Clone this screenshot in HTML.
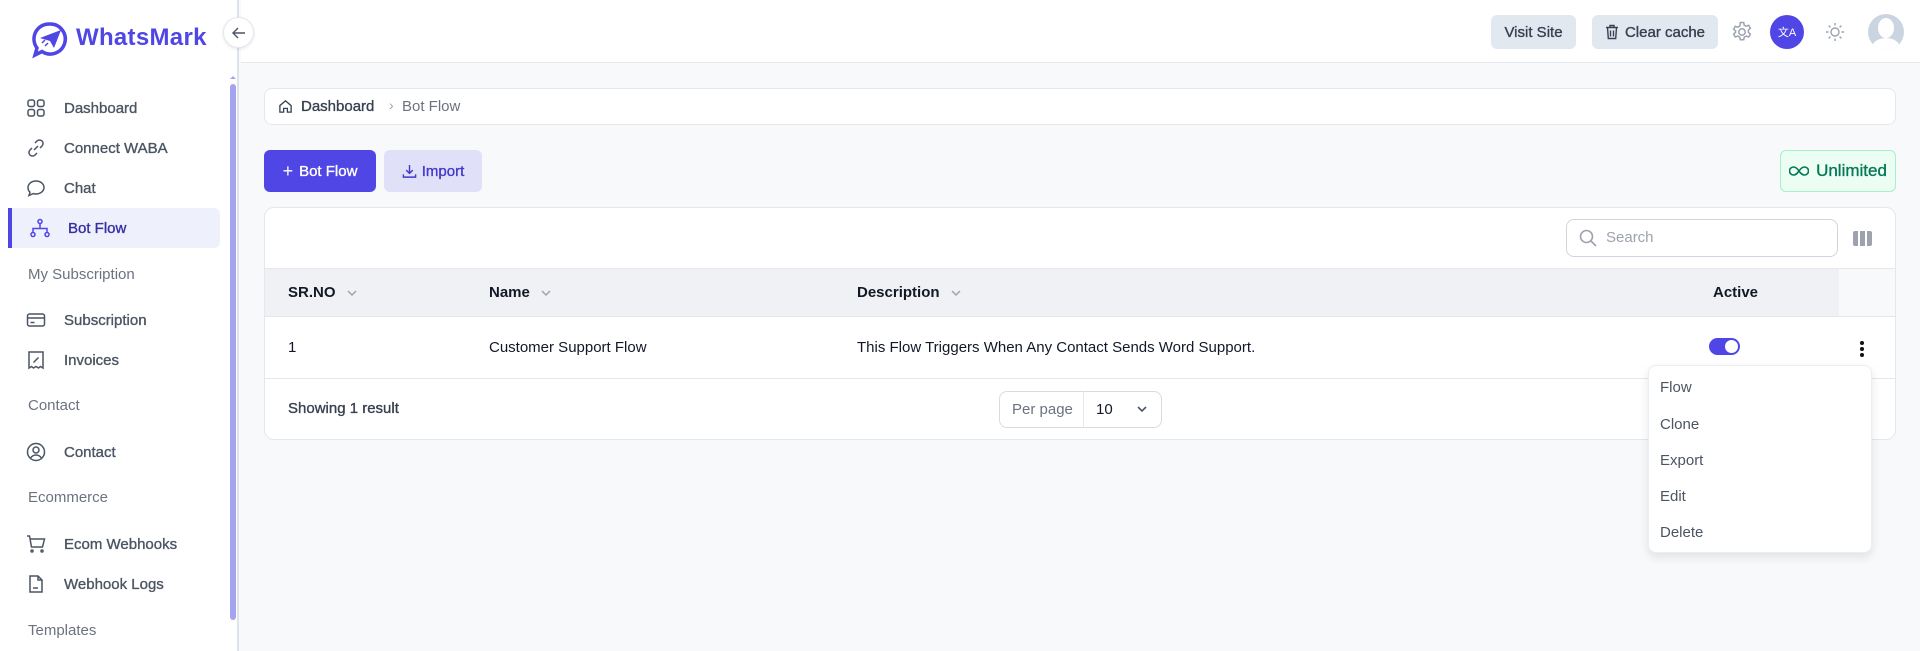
<!DOCTYPE html>
<html><head><meta charset="utf-8"><style>
*{box-sizing:border-box;margin:0;padding:0}
body{width:1920px;height:651px;overflow:hidden;background:#f8f9fb;font-family:"Liberation Sans",sans-serif;position:relative;color:#111827}
.a{position:absolute}
.m{-webkit-text-stroke:0.35px currentColor}
.sb{left:0;top:0;width:239px;height:651px;background:#fff;border-right:2px solid #dfe3ea}
.nav{left:26px;font-size:15px;color:#4b5563;-webkit-text-stroke:0.35px #4b5563;display:flex;align-items:center;height:40px}
.nav svg{width:20px;height:20px;margin-right:18px;fill:none;stroke:#4b5563;stroke-width:1.5}
.sec{left:28px;font-size:15px;color:#6b7280}
.hdr{left:241px;top:0;width:1679px;height:63px;background:#fff;border-bottom:1px solid #e3e7ee}
.btn{border-radius:6px;font-size:15px;display:flex;align-items:center;justify-content:center;-webkit-text-stroke:0.35px currentColor}
.card{background:#fff;border:1px solid #e5e7eb;border-radius:10px}
.th{font-size:15px;font-weight:bold;color:#111827;top:268px;height:49px;display:flex;align-items:center}
.chev{width:12px;height:12px;margin-left:10px;fill:none;stroke:#9ca3af;stroke-width:1.5}
.td{font-size:15px;color:#111827;top:317px;height:61px;display:flex;align-items:center}
.mi{left:1660px;font-size:15px;color:#4b5563}
</style></head><body>
<div class="a sb"></div>
<svg class="a" style="left:31px;top:21px" width="38" height="38" viewBox="0 0 38 38"><path d="M19 3a15 15 0 1 1-8 27.5L4 34l2-7A15 15 0 0 1 19 3z" fill="none" stroke="#4f46e5" stroke-width="3.5"/><path d="M9 17l21-8-7 18-4-7z" fill="#4f46e5"/><path d="M11 22l3-3M14 25l3-3" stroke="#4f46e5" stroke-width="1.5"/></svg>
<div class="a" style="left:76px;top:24px;font-size:24px;font-weight:bold;color:#4f46e5;letter-spacing:0.3px">WhatsMark</div>
<div class="a" style="left:223px;top:17px;width:31px;height:31px;border-radius:50%;background:#fff;border:1px solid #e5e7eb;box-shadow:0 1px 3px rgba(0,0,0,.1);z-index:3;display:flex;align-items:center;justify-content:center"><svg width="16" height="16" viewBox="0 0 16 16" fill="none" stroke="#4b5563" stroke-width="1.4"><path d="M14 8H2M7 3L2 8l5 5"/></svg></div>
<div class="a" style="left:230px;top:84px;width:6px;height:536px;background:#a5a4ef;border-radius:3px"></div>
<div class="a" style="left:230px;top:76px;width:0;height:0;border-left:3px solid transparent;border-right:3px solid transparent;border-bottom:3px solid #a5a4ef"></div>
<div class="a nav" style="top:88px"><svg viewBox="0 0 20 20"><rect x="2" y="2" width="6.5" height="6.5" rx="2"/><rect x="11.5" y="2" width="6.5" height="6.5" rx="2"/><rect x="2" y="11.5" width="6.5" height="6.5" rx="2"/><rect x="11.5" y="11.5" width="6.5" height="6.5" rx="2"/></svg>Dashboard</div>
<div class="a nav" style="top:128px"><svg viewBox="0 0 20 20"><path d="M8 12l4-4M9 5l2-2a3.5 3.5 0 0 1 5 5l-2 2M11 15l-2 2a3.5 3.5 0 0 1-5-5l2-2"/></svg>Connect WABA</div>
<div class="a nav" style="top:168px"><svg viewBox="0 0 20 20"><path d="M10 3c4.5 0 8 2.9 8 6.5S14.5 16 10 16c-1 0-2-.1-2.8-.4L3 17.5l1-3.3C2.7 13 2 11.3 2 9.5 2 5.9 5.5 3 10 3z"/></svg>Chat</div>
<div class="a" style="left:8px;top:208px;width:212px;height:40px;background:#eef0fb;border-radius:0 6px 6px 0;border-left:4px solid #4f46e5"></div>
<div class="a nav" style="top:208px;left:30px;color:#3730a3;-webkit-text-stroke:0.35px #3730a3"><svg viewBox="0 0 20 20" style="stroke:#4f46e5"><circle cx="10" cy="3.5" r="2"/><circle cx="3" cy="16.5" r="2"/><circle cx="17" cy="16.5" r="2"/><path d="M10 5.5v5M3 14.5v-4h14v4"/></svg>Bot Flow</div>
<div class="a sec" style="top:266px">My Subscription</div>
<div class="a nav" style="top:300px"><svg viewBox="0 0 20 20"><rect x="1.5" y="4" width="17" height="12" rx="2"/><path d="M1.5 8h17M4.5 12.5h4"/></svg>Subscription</div>
<div class="a nav" style="top:340px"><svg viewBox="0 0 20 20"><path d="M3 2h14v16l-2.5-1.5-2 1.5-2.5-1.5-2.5 1.5-2-1.5L3 18z"/><path d="M7.5 12.5l5-5M8 8h.1M12 12h.1"/></svg>Invoices</div>
<div class="a sec" style="top:397px">Contact</div>
<div class="a nav" style="top:432px"><svg viewBox="0 0 20 20"><circle cx="10" cy="10" r="8.5"/><circle cx="10" cy="8" r="3"/><path d="M4.5 16c1.5-2 3.3-3 5.5-3s4 1 5.5 3"/></svg>Contact</div>
<div class="a sec" style="top:489px">Ecommerce</div>
<div class="a nav" style="top:524px"><svg viewBox="0 0 20 20"><path d="M1 2h2.5l2 11h11l2-8H4.5"/><circle cx="6" cy="17" r="1"/><circle cx="16" cy="17" r="1"/></svg>Ecom Webhooks</div>
<div class="a nav" style="top:564px"><svg viewBox="0 0 20 20"><path d="M4 2h8l4 4v12H4zM12 2v4h4M7 14h5"/></svg>Webhook Logs</div>
<div class="a sec" style="top:622px">Templates</div>
<div class="a hdr"></div>
<div class="a btn" style="left:1491px;top:15px;width:85px;height:34px;background:#e2e8f0;color:#374151">Visit Site</div>
<div class="a btn" style="left:1592px;top:15px;width:126px;height:34px;background:#e2e8f0;color:#374151"><svg width="14" height="16" viewBox="0 0 14 16" fill="none" stroke="#374151" stroke-width="1.4" style="margin-right:6px"><path d="M1 3.5h12M5 3.5V1.5h4v2M2.5 3.5l.8 11h7.4l.8-11M5.5 6.5v6M8.5 6.5v6"/></svg>Clear cache</div>
<svg class="a" style="left:1730px;top:20px" width="24" height="24" viewBox="0 0 24 24" fill="none" stroke="#9ca3af" stroke-width="1.5"><circle cx="12" cy="12" r="3.2"/><path d="M10.3 2.5h3.4l.5 2.6 2 1.1 2.5-.9 1.7 2.9-2 1.8v2.3l2 1.8-1.7 2.9-2.5-.9-2 1.1-.5 2.6h-3.4l-.5-2.6-2-1.1-2.5.9-1.7-2.9 2-1.8V11l-2-1.8 1.7-2.9 2.5.9 2-1.1z"/></svg>
<div class="a" style="left:1770px;top:15px;width:34px;height:34px;border-radius:50%;background:#4f46e5;color:#fff;font-size:11px;display:flex;align-items:center;justify-content:center">文A</div>
<svg class="a" style="left:1825px;top:22px" width="20" height="20" viewBox="0 0 20 20" fill="none" stroke="#9ca3af" stroke-width="1.4"><circle cx="10" cy="10" r="4"/><path d="M10 1v2.5M10 16.5V19M1 10h2.5M16.5 10H19M3.6 3.6l1.8 1.8M14.6 14.6l1.8 1.8M3.6 16.4l1.8-1.8M14.6 5.4l1.8-1.8"/></svg>
<div class="a" style="left:1868px;top:14px;width:36px;height:36px;border-radius:50%;background:#cbd5e1;overflow:hidden"><div class="a" style="left:10px;top:4px;width:16px;height:20px;border-radius:50%;background:#fff"></div><div class="a" style="left:4px;top:24px;width:28px;height:20px;border-radius:50%;background:#fff"></div></div>
<div class="a card" style="left:264px;top:88px;width:1632px;height:37px;border-radius:8px"></div>
<svg class="a" style="left:278px;top:99px" width="15" height="15" viewBox="0 0 16 16" fill="none" stroke="#374151" stroke-width="1.4"><path d="M2 7l6-5 6 5v7H10v-4H6v4H2z"/></svg>
<div class="a m" style="left:301px;top:98px;font-size:15px;color:#374151">Dashboard</div>
<div class="a" style="left:389px;top:97px;font-size:14px;color:#9ca3af">›</div>
<div class="a" style="left:402px;top:98px;font-size:15px;color:#6b7280">Bot Flow</div>
<div class="a btn" style="left:264px;top:150px;width:112px;height:42px;background:#4f46e5;color:#fff"><span style="font-size:18px;-webkit-text-stroke:0;margin-right:6px">+</span>Bot Flow</div>
<div class="a btn" style="left:384px;top:150px;width:98px;height:42px;background:#e0e0f8;color:#4338ca"><svg width="15" height="15" viewBox="0 0 16 16" fill="none" stroke="#4338ca" stroke-width="1.5" style="margin-right:5px"><path d="M8 1v9M4.5 6.5L8 10l3.5-3.5M1.5 11v3h13v-3"/></svg>Import</div>
<div class="a btn" style="left:1780px;top:150px;width:116px;height:42px;background:#ecfdf3;border:1px solid #a7f0c8;color:#047857;font-size:17px"><svg width="20" height="12" viewBox="0 0 20 12" fill="none" stroke="#047857" stroke-width="1.6" style="margin-right:7px"><path d="M10 6C8 3 6.5 2 4.5 2a4 4 0 0 0 0 8C6.5 10 8 9 10 6s3.5-4 5.5-4a4 4 0 0 1 0 8C13.5 10 12 9 10 6z"/></svg>Unlimited</div>
<div class="a card" style="left:264px;top:207px;width:1632px;height:233px"></div>
<div class="a" style="left:1566px;top:219px;width:272px;height:38px;border:1px solid #d1d5db;border-radius:8px;background:#fff"></div>
<svg class="a" style="left:1579px;top:229px" width="18" height="18" viewBox="0 0 18 18" fill="none" stroke="#9ca3af" stroke-width="1.6"><circle cx="7.5" cy="7.5" r="6"/><path d="M12 12l5 5"/></svg>
<div class="a" style="left:1606px;top:229px;font-size:15px;color:#9ca3af">Search</div>
<div class="a" style="left:1853px;top:231px;width:19px;height:15px;display:flex;gap:2px"><div style="flex:1;background:#9ca3af;border-radius:2px 0 0 2px"></div><div style="flex:1;background:#9ca3af"></div><div style="flex:1;background:#9ca3af;border-radius:0 2px 2px 0"></div></div>
<div class="a" style="left:265px;top:268px;width:1574px;height:49px;background:#f0f1f4;border-top:1px solid #e5e7eb;border-bottom:1px solid #e5e7eb"></div>
<div class="a" style="left:1839px;top:268px;width:56px;height:49px;background:#f8f9fb;border-top:1px solid #e5e7eb;border-bottom:1px solid #e5e7eb"></div>
<div class="a th" style="left:288px">SR.NO<svg class="chev" viewBox="0 0 12 12"><path d="M2 4l4 4 4-4"/></svg></div>
<div class="a th" style="left:489px">Name<svg class="chev" viewBox="0 0 12 12"><path d="M2 4l4 4 4-4"/></svg></div>
<div class="a th" style="left:857px">Description<svg class="chev" viewBox="0 0 12 12"><path d="M2 4l4 4 4-4"/></svg></div>
<div class="a th" style="left:1713px">Active</div>
<div class="a td" style="left:288px">1</div>
<div class="a td" style="left:489px">Customer Support Flow</div>
<div class="a td" style="left:857px">This Flow Triggers When Any Contact Sends Word Support.</div>
<div class="a" style="left:1709px;top:338px;width:31px;height:17px;border-radius:9px;background:#4f46e5"><div class="a" style="left:16px;top:2px;width:13px;height:13px;border-radius:50%;background:#fff"></div></div>
<div class="a" style="left:1860px;top:341px;width:4px;height:16px;display:flex;flex-direction:column;justify-content:space-between"><i style="display:block;width:4px;height:4px;border-radius:50%;background:#111"></i><i style="display:block;width:4px;height:4px;border-radius:50%;background:#111"></i><i style="display:block;width:4px;height:4px;border-radius:50%;background:#111"></i></div>
<div class="a" style="left:265px;top:378px;width:1630px;height:1px;background:#e5e7eb"></div>
<div class="a m" style="left:288px;top:400px;font-size:15px;color:#374151">Showing 1 result</div>
<div class="a" style="left:999px;top:391px;width:163px;height:37px;border:1px solid #d8dbe0;border-radius:8px;background:#fff"></div>
<div class="a" style="left:1083px;top:391px;width:1px;height:37px;background:#e5e7eb"></div>
<div class="a" style="left:1012px;top:401px;font-size:15px;color:#6b7280">Per page</div>
<div class="a" style="left:1096px;top:401px;font-size:15px;color:#111827">10</div>
<svg class="a" style="left:1136px;top:403px" width="12" height="12" viewBox="0 0 12 12" fill="none" stroke="#4b5563" stroke-width="1.6"><path d="M2 4l4 4 4-4"/></svg>
<div class="a" style="left:1648px;top:365px;width:224px;height:188px;background:#fff;border:1px solid #eceef2;border-radius:8px;box-shadow:0 4px 10px rgba(0,0,0,.1)"></div>
<div class="a mi" style="top:379px">Flow</div>
<div class="a mi" style="top:416px">Clone</div>
<div class="a mi" style="top:452px">Export</div>
<div class="a mi" style="top:488px">Edit</div>
<div class="a mi" style="top:524px">Delete</div>
</body></html>
